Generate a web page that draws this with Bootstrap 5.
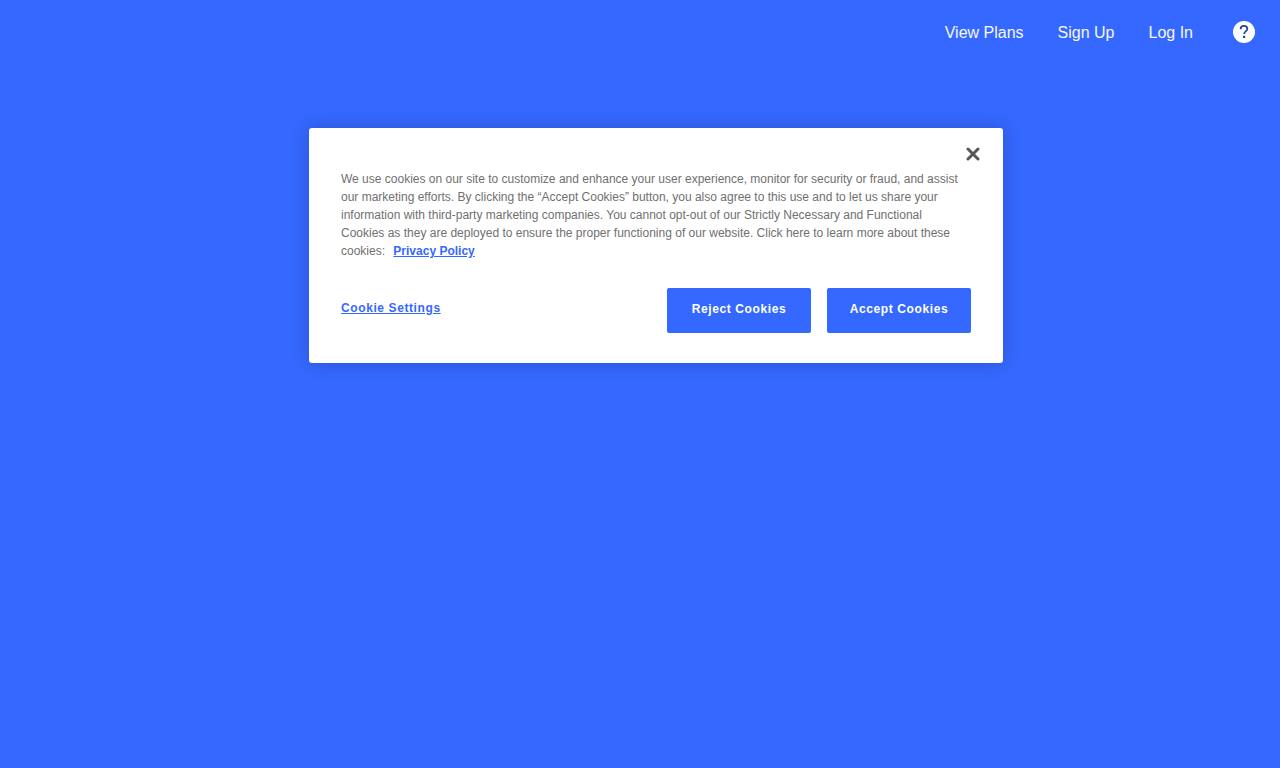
<!DOCTYPE html>
<html lang="en">
<head>
<meta charset="utf-8">
<meta name="viewport" content="width=device-width, initial-scale=1">
<title>Cookie preferences</title>
<link href="https://cdn.jsdelivr.net/npm/bootstrap@5.3.0/dist/css/bootstrap.min.css" rel="stylesheet">
<style>
  :root { --brand: #3568ff; }
  body { background: var(--brand); font-family: "Liberation Sans", Arial, sans-serif; }
  .site-nav { gap: 34px; padding: 19px 25px 19px 32px; font-size: 16px; line-height: 24px; }
  .site-nav a { color: #f5f8ff; }
  .site-nav .nav-text { padding-top: 2px; }
  .help-link { margin-left: 6px; }
  .consent-area { padding: 64px 32px 32px 64px; }
  .consent { max-width: 694px; border-radius: 3px; padding: 42px 32px 30px; box-shadow: 0 0 18px rgba(0, 0, 0, .2); }
  .consent-copy { font-size: 12px; line-height: 18px; color: #707070; margin-bottom: 28px; padding-right: 6px; }
  .consent a, .settings-btn { color: var(--brand); font-weight: 700; }
  .consent-copy a { margin-left: 5px; white-space: nowrap; }
  .consent-close { position: absolute; top: 16px; right: 20px; padding: 3px; line-height: 0; }
  .settings-btn, .choice-btn { font-size: 12px; line-height: 18px; letter-spacing: .05em; }
  .settings-btn { padding: 11px 0; }
  .choice-btn { width: 144px; border-radius: 2px; font-weight: 700; color: #fff; background: var(--brand); padding: 12px 8px 15px; }
  .choice-btn:hover { color: #fff; background: #2858e6; }
</style>
</head>
<body>
<header>
  <nav class="site-nav d-flex justify-content-end align-items-center" aria-label="Main">
    <a class="nav-text text-decoration-none" href="#plans">View Plans</a>
    <a class="nav-text text-decoration-none" href="#signup">Sign Up</a>
    <a class="nav-text text-decoration-none" href="#login">Log In</a>
    <a class="help-link d-flex" href="#help" aria-label="Help">
      <svg width="22" height="22" viewBox="0 0 22 22" aria-hidden="true">
        <circle cx="11" cy="11" r="11" fill="#fff"/>
        <path d="M7.7 8.2C7.7 6 9.1 4.9 11 4.9c1.9 0 3.3 1.1 3.3 2.9 0 2.5-3.2 2.7-3.2 5.3" fill="none" stroke="#24479f" stroke-width="1.8"/>
        <rect x="10" y="14.8" width="2.2" height="2.2" fill="#24479f"/>
      </svg>
    </a>
  </nav>
</header>
<main class="consent-area">
  <section class="consent position-relative bg-white mx-auto" role="dialog" aria-label="Cookie consent">
    <button type="button" class="consent-close btn border-0" aria-label="Close">
      <svg width="14" height="14" viewBox="0 0 14 14" aria-hidden="true">
        <path d="M2 2l10 10M12 2L2 12" stroke="#565656" stroke-width="3" stroke-linecap="round"/>
      </svg>
    </button>
    <p class="consent-copy">We use cookies on our site to customize and enhance your user experience, monitor for security or fraud, and assist our marketing efforts. By clicking the “Accept Cookies” button, you also agree to this use and to let us share your information with third-party marketing companies. You cannot opt-out of our Strictly Necessary and Functional Cookies as they are deployed to ensure the proper functioning of our website. Click here to learn more about these cookies: <a href="#privacy">Privacy Policy</a></p>
    <div class="d-flex flex-wrap align-items-start justify-content-between gap-3">
      <button type="button" class="settings-btn btn border-0 text-decoration-underline">Cookie Settings</button>
      <div class="d-flex flex-wrap gap-3">
        <button type="button" class="choice-btn btn border-0">Reject Cookies</button>
        <button type="button" class="choice-btn btn border-0">Accept Cookies</button>
      </div>
    </div>
  </section>
</main>
<script src="https://cdn.jsdelivr.net/npm/bootstrap@5.3.0/dist/js/bootstrap.bundle.min.js"></script>
</body>
</html>
